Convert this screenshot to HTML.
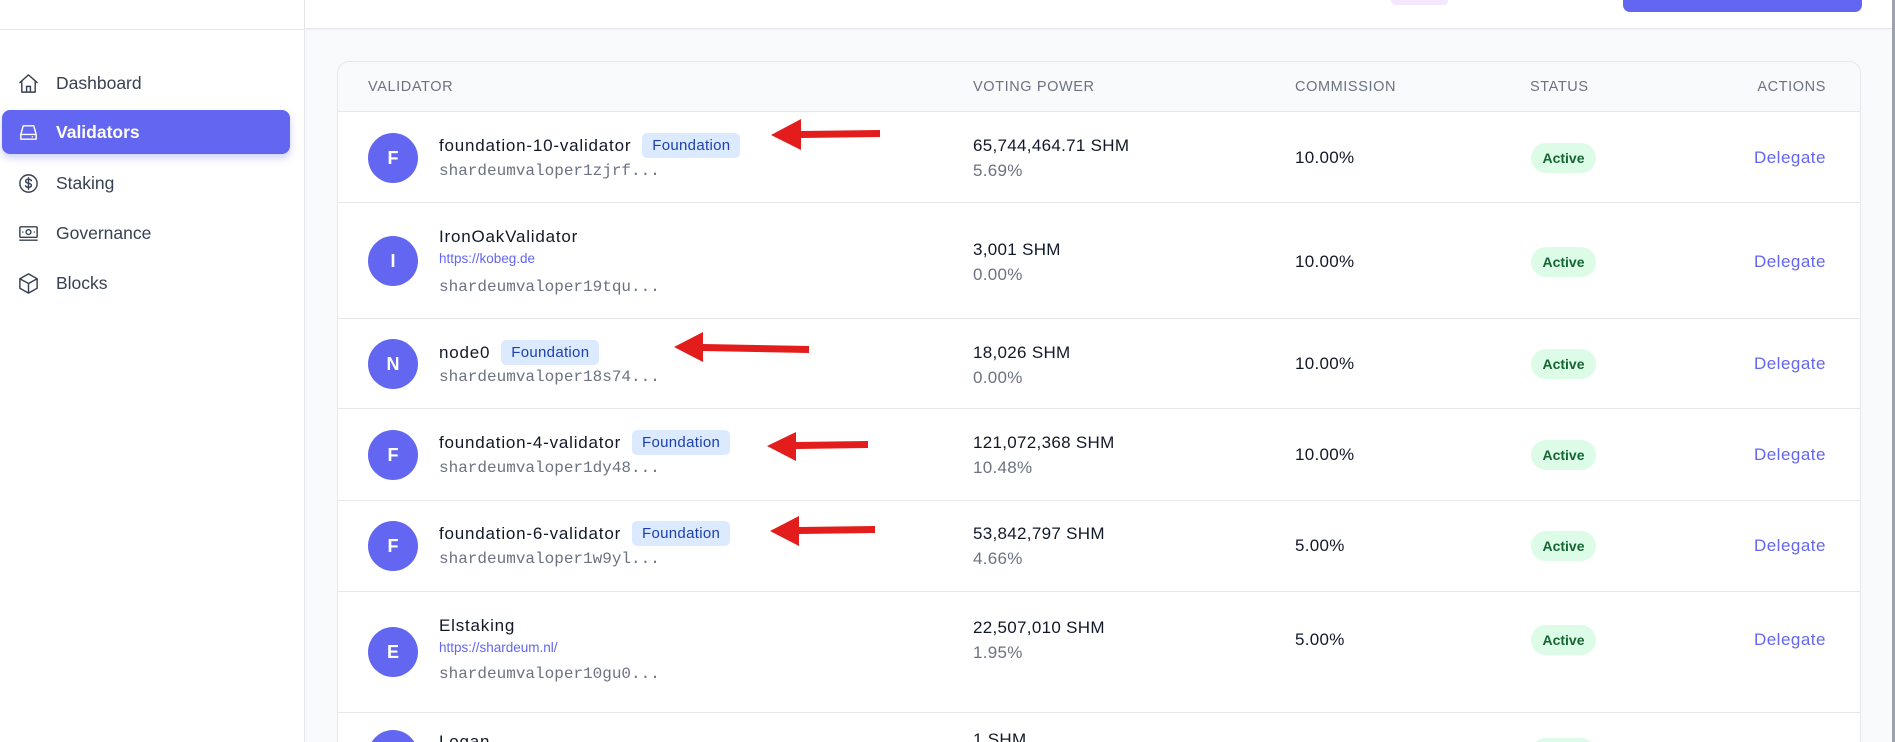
<!DOCTYPE html>
<html><head><meta charset="utf-8"><style>
*{margin:0;padding:0;box-sizing:border-box}
html{overflow:hidden;width:1895px;height:742px}
body{width:1895px;height:742px;overflow:hidden;background:#f9fafb;font-family:"Liberation Sans",sans-serif;position:relative;color:#111827}
.abs{position:absolute}
#side{left:0;top:0;width:305px;height:742px;background:#fff;border-right:1px solid #e5e7eb}
#top{left:305px;top:0;width:1590px;height:29px;background:#fff;border-bottom:1px solid #e5e7eb;box-shadow:0 1px 2px rgba(0,0,0,.04)}
.nav{left:17px;height:24px;display:flex;align-items:center;font-size:17.5px;color:#374151}
.nav svg{width:23px;height:23px;margin-right:16px;fill:none;stroke:#374151;stroke-width:1.5;stroke-linecap:round;stroke-linejoin:round}
#act{left:2px;top:110px;width:288px;height:44px;background:#6366f1;border-radius:8px;box-shadow:0 4px 8px rgba(99,102,241,.3)}
#card{left:337px;top:61px;width:1524px;height:681px;background:#fff;border:1px solid #e5e7eb;border-bottom:none;border-radius:12px 12px 0 0;overflow:hidden}
#thead{left:0;top:0;width:100%;height:50px;background:#f9fafb;border-bottom:1px solid #e5e7eb}
.th{font-size:14.5px;color:#6b7280;letter-spacing:.6px;top:17px}
.line{left:0;width:100%;height:1px;background:#e5e7eb}
.av{width:50px;height:50px;border-radius:50%;background:#6366f1;color:#fff;font-weight:bold;font-size:18px;display:flex;align-items:center;justify-content:center;left:30px}
.nm{left:101px;font-size:17px;letter-spacing:.8px;color:#111827;line-height:20px;display:flex;align-items:center}
.ad{left:101px;font-family:"Liberation Mono",monospace;font-size:16px;color:#6b7280;line-height:18px}
.lk{left:101px;font-size:13.5px;color:#6366f1;line-height:18px}
.bd{height:25px;line-height:25px;padding:0 10px;background:#dbeafe;color:#1e40af;font-size:15px;letter-spacing:.3px;border-radius:5px;margin-left:11px}
.vp{left:635px;font-size:17px;letter-spacing:.3px;line-height:20px}
.pc{left:635px;font-size:17px;letter-spacing:.3px;color:#6b7280;line-height:20px}
.cm{left:957px;font-size:17px;letter-spacing:.3px;line-height:20px}
.st{left:1193px;width:65px;height:30px;border-radius:15px;background:#dcfce7;color:#166534;font-size:14px;font-weight:bold;text-align:center;line-height:30px}
.dl{right:34px;font-size:17px;letter-spacing:.5px;color:#6366f1;line-height:20px}
</style></head><body>
<div id="side" class="abs"></div>
<div class="abs" style="left:0;top:29px;width:305px;height:1px;background:#e5e7eb"></div>
<div id="top" class="abs"></div>
<div class="abs" style="left:1391px;top:0;width:57px;height:5px;background:#f3e8ff;border-radius:0 0 4px 4px"></div>
<div class="abs" style="left:1623px;top:0;width:239px;height:12px;background:#6366f1;border-radius:0 0 7px 7px"></div>
<div class="abs" style="left:1892px;top:0;width:3px;height:742px;background:#9ca3af"></div>

<div id="act" class="abs"></div>
<div class="abs nav" style="top:71px"><svg viewBox="0 0 24 24"><path d="M3 11L12 3l9 8M5 9.5V21h14V9.5M10 21v-6h4v6"/></svg>Dashboard</div>
<div class="abs nav" style="top:120px;color:#fff;font-weight:bold"><svg viewBox="0 0 24 24" style="stroke:#fff"><path d="M4 14l2.5-9h11L20 14M4 14v5h16v-5H4M16 16.5h.01"/></svg>Validators</div>
<div class="abs nav" style="top:171px"><svg viewBox="0 0 24 24"><circle cx="12" cy="12" r="9"/><path d="M15 9c-.5-1-1.6-1.5-3-1.5-1.7 0-3 .8-3 2s1.2 1.8 3 2.2 3 1 3 2.3-1.3 2-3 2c-1.4 0-2.6-.6-3-1.6M12 6v12"/></svg>Staking</div>
<div class="abs nav" style="top:221px"><svg viewBox="0 0 24 24"><rect x="3" y="5" width="18" height="11" rx="1"/><circle cx="12" cy="10.5" r="2.5"/><path d="M6 10.5h.01M18 10.5h.01M3 19h18"/></svg>Governance</div>
<div class="abs nav" style="top:271px"><svg viewBox="0 0 24 24"><path d="M12 2l9 5v10l-9 5-9-5V7zM3 7l9 5 9-5M12 12v10"/></svg>Blocks</div>

<div id="card" class="abs">
<div id="thead" class="abs"></div>
<div class="abs th" style="left:30px">VALIDATOR</div>
<div class="abs th" style="left:635px">VOTING POWER</div>
<div class="abs th" style="left:957px">COMMISSION</div>
<div class="abs th" style="left:1192px">STATUS</div>
<div class="abs th" style="right:34px">ACTIONS</div>

<div class="abs av" style="top:71px">F</div>
<div class="abs nm" style="top:71px;height:25px">foundation-10-validator<span class="bd">Foundation</span></div>
<div class="abs ad" style="top:100px">shardeumvaloper1zjrf...</div>
<div class="abs vp" style="top:74px">65,744,464.71 SHM</div>
<div class="abs pc" style="top:99px">5.69%</div>
<div class="abs cm" style="top:86px">10.00%</div>
<div class="abs st" style="top:81px">Active</div>
<div class="abs dl" style="top:86px">Delegate</div>
<div class="abs line" style="top:140px"></div>

<div class="abs av" style="top:174px">I</div>
<div class="abs nm" style="top:165px">IronOakValidator</div>
<div class="abs lk" style="top:188px">https://kobeg.de</div>
<div class="abs ad" style="top:216px">shardeumvaloper19tqu...</div>
<div class="abs vp" style="top:178px">3,001 SHM</div>
<div class="abs pc" style="top:203px">0.00%</div>
<div class="abs cm" style="top:190px">10.00%</div>
<div class="abs st" style="top:185px">Active</div>
<div class="abs dl" style="top:190px">Delegate</div>
<div class="abs line" style="top:256px"></div>

<div class="abs av" style="top:277px">N</div>
<div class="abs nm" style="top:278px;height:25px">node0<span class="bd">Foundation</span></div>
<div class="abs ad" style="top:306px">shardeumvaloper18s74...</div>
<div class="abs vp" style="top:281px">18,026 SHM</div>
<div class="abs pc" style="top:306px">0.00%</div>
<div class="abs cm" style="top:292px">10.00%</div>
<div class="abs st" style="top:287px">Active</div>
<div class="abs dl" style="top:292px">Delegate</div>
<div class="abs line" style="top:346px"></div>

<div class="abs av" style="top:368px">F</div>
<div class="abs nm" style="top:368px;height:25px">foundation-4-validator<span class="bd">Foundation</span></div>
<div class="abs ad" style="top:397px">shardeumvaloper1dy48...</div>
<div class="abs vp" style="top:371px">121,072,368 SHM</div>
<div class="abs pc" style="top:396px">10.48%</div>
<div class="abs cm" style="top:383px">10.00%</div>
<div class="abs st" style="top:378px">Active</div>
<div class="abs dl" style="top:383px">Delegate</div>
<div class="abs line" style="top:438px"></div>

<div class="abs av" style="top:459px">F</div>
<div class="abs nm" style="top:459px;height:25px">foundation-6-validator<span class="bd">Foundation</span></div>
<div class="abs ad" style="top:488px">shardeumvaloper1w9yl...</div>
<div class="abs vp" style="top:462px">53,842,797 SHM</div>
<div class="abs pc" style="top:487px">4.66%</div>
<div class="abs cm" style="top:474px">5.00%</div>
<div class="abs st" style="top:469px">Active</div>
<div class="abs dl" style="top:474px">Delegate</div>
<div class="abs line" style="top:529px"></div>

<div class="abs av" style="top:565px">E</div>
<div class="abs nm" style="top:554px">Elstaking</div>
<div class="abs lk" style="top:577px">https://shardeum.nl/</div>
<div class="abs ad" style="top:603px">shardeumvaloper10gu0...</div>
<div class="abs vp" style="top:556px">22,507,010 SHM</div>
<div class="abs pc" style="top:581px">1.95%</div>
<div class="abs cm" style="top:568px">5.00%</div>
<div class="abs st" style="top:563px">Active</div>
<div class="abs dl" style="top:568px">Delegate</div>
<div class="abs line" style="top:650px"></div>

<div class="abs av" style="top:668px">L</div>
<div class="abs nm" style="top:670px">Logan</div>
<div class="abs vp" style="top:668px">1 SHM</div>
<div class="abs st" style="top:676px">Active</div>
</div>

<svg class="abs" style="left:0;top:0" width="1895" height="742">
<g fill="#e31c1c">
<polygon points="771,135 801,119 801,131 880,130 880,137 801,138 801,150"/>
<polygon points="674,347 703,332 703,344 809,346 809,353 703,351 703,362"/>
<polygon points="767,446 796,432 796,442 868,441 868,448 796,449 796,461"/>
<polygon points="770,531 799,516 799,527 875,526 875,533 799,534 799,546"/>
</g>
</svg>
</body></html>
